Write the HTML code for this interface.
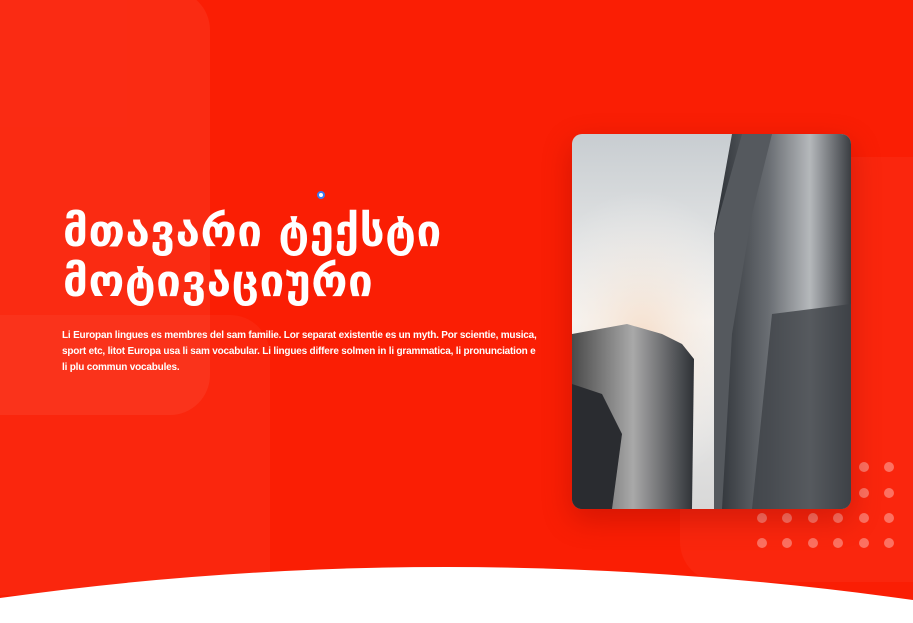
<!DOCTYPE html>
<html><head><meta charset="utf-8"><style>
*{margin:0;padding:0;box-sizing:border-box}
body{width:913px;height:623px;overflow:hidden;background:#fa1e04;position:relative;font-family:"Liberation Sans","DejaVu Sans",sans-serif}
.s{position:absolute;background:rgba(255,255,255,0.06)}
h1{position:absolute;left:63px;top:207px;color:#fff;font-family:"DejaVu Sans",sans-serif;font-weight:bold;font-size:44px;line-height:50px;white-space:nowrap;letter-spacing:0.5px}
p{position:absolute;left:62px;top:328px;width:480px;color:#fff;font-size:10px;font-weight:bold;line-height:16px;letter-spacing:-0.2px}
.d{position:absolute;width:10px;height:10px;border-radius:50%;background:rgba(255,255,255,0.35)}
</style></head><body>
<div class="s" style="left:-30px;top:-10px;width:240px;height:425px;border-radius:0 40px 40px 0"></div>
<div class="s" style="left:-30px;top:315px;width:300px;height:280px;border-radius:0 40px 0 0;background:rgba(255,255,255,0.04)"></div>
<div class="s" style="left:680px;top:157px;width:260px;height:425px;border-radius:40px 0 0 40px;background:rgba(255,255,255,0.04)"></div>
<div style="position:absolute;left:317px;top:191px;width:8px;height:8px;border-radius:50%;background:#fff;border:2px solid #3b7bf0"></div>
<h1>მთავარი ტექსტი<br>მოტივაციური</h1>
<p>Li Europan lingues es membres del sam familie. Lor separat existentie es un myth. Por scientie, musica, sport etc, litot Europa usa li sam vocabular. Li lingues differe solmen in li grammatica, li pronunciation e li plu commun vocabules.</p>
<div class="d" style="left:859px;top:462px"></div><div class="d" style="left:884px;top:462px"></div>
<div class="d" style="left:859px;top:488px"></div><div class="d" style="left:884px;top:488px"></div>
<div class="d" style="left:757px;top:513px"></div><div class="d" style="left:782px;top:513px"></div><div class="d" style="left:808px;top:513px"></div><div class="d" style="left:833px;top:513px"></div><div class="d" style="left:859px;top:513px"></div><div class="d" style="left:884px;top:513px"></div>
<div class="d" style="left:757px;top:538px"></div><div class="d" style="left:782px;top:538px"></div><div class="d" style="left:808px;top:538px"></div><div class="d" style="left:833px;top:538px"></div><div class="d" style="left:859px;top:538px"></div><div class="d" style="left:884px;top:538px"></div>
<svg style="position:absolute;left:572px;top:134px;border-radius:10px;box-shadow:0 10px 30px rgba(120,0,0,0.3)" width="279" height="375" viewBox="0 0 279 375">
<defs>
<linearGradient id="sky" x1="0" y1="0" x2="0" y2="1"><stop offset="0" stop-color="#c8cdd1"/><stop offset="0.5" stop-color="#f3f2f0"/><stop offset="1" stop-color="#d8d8d8"/></linearGradient>
<radialGradient id="sun" cx="0.25" cy="0.55" r="0.4"><stop offset="0" stop-color="#f7d9c0" stop-opacity="0.8"/><stop offset="1" stop-color="#fff" stop-opacity="0"/></radialGradient>
<linearGradient id="b1" x1="0" y1="0" x2="1" y2="0"><stop offset="0" stop-color="#4a4a4a"/><stop offset="0.5" stop-color="#a9a9a9"/><stop offset="1" stop-color="#2e3136"/></linearGradient>
<linearGradient id="b2" x1="0" y1="0" x2="1" y2="0"><stop offset="0" stop-color="#2c3035"/><stop offset="0.4" stop-color="#6a6e73"/><stop offset="0.7" stop-color="#b5b8bb"/><stop offset="1" stop-color="#3a3d42"/></linearGradient>
</defs>
<rect width="279" height="375" fill="url(#sky)"/>
<rect width="279" height="375" fill="url(#sun)"/>
<polygon points="0,200 55,190 90,200 110,210 122,225 120,375 0,375" fill="url(#b1)"/>
<polygon points="0,250 30,260 50,300 40,375 0,375" fill="#2a2c30"/>
<polygon points="142,100 160,0 279,0 279,375 142,375" fill="url(#b2)"/>
<polygon points="170,0 200,0 180,80 160,200 150,375 142,375 142,100" fill="#55595e"/>
<polygon points="200,180 279,170 279,375 180,375" fill="#3f4247" opacity="0.8"/>
</svg>
<svg style="position:absolute;left:0;top:555px" width="913" height="68" viewBox="0 0 913 68"><path d="M0 43 Q450 -20 913 45 L913 68 L0 68Z" fill="#fff"/></svg>
</body></html>
